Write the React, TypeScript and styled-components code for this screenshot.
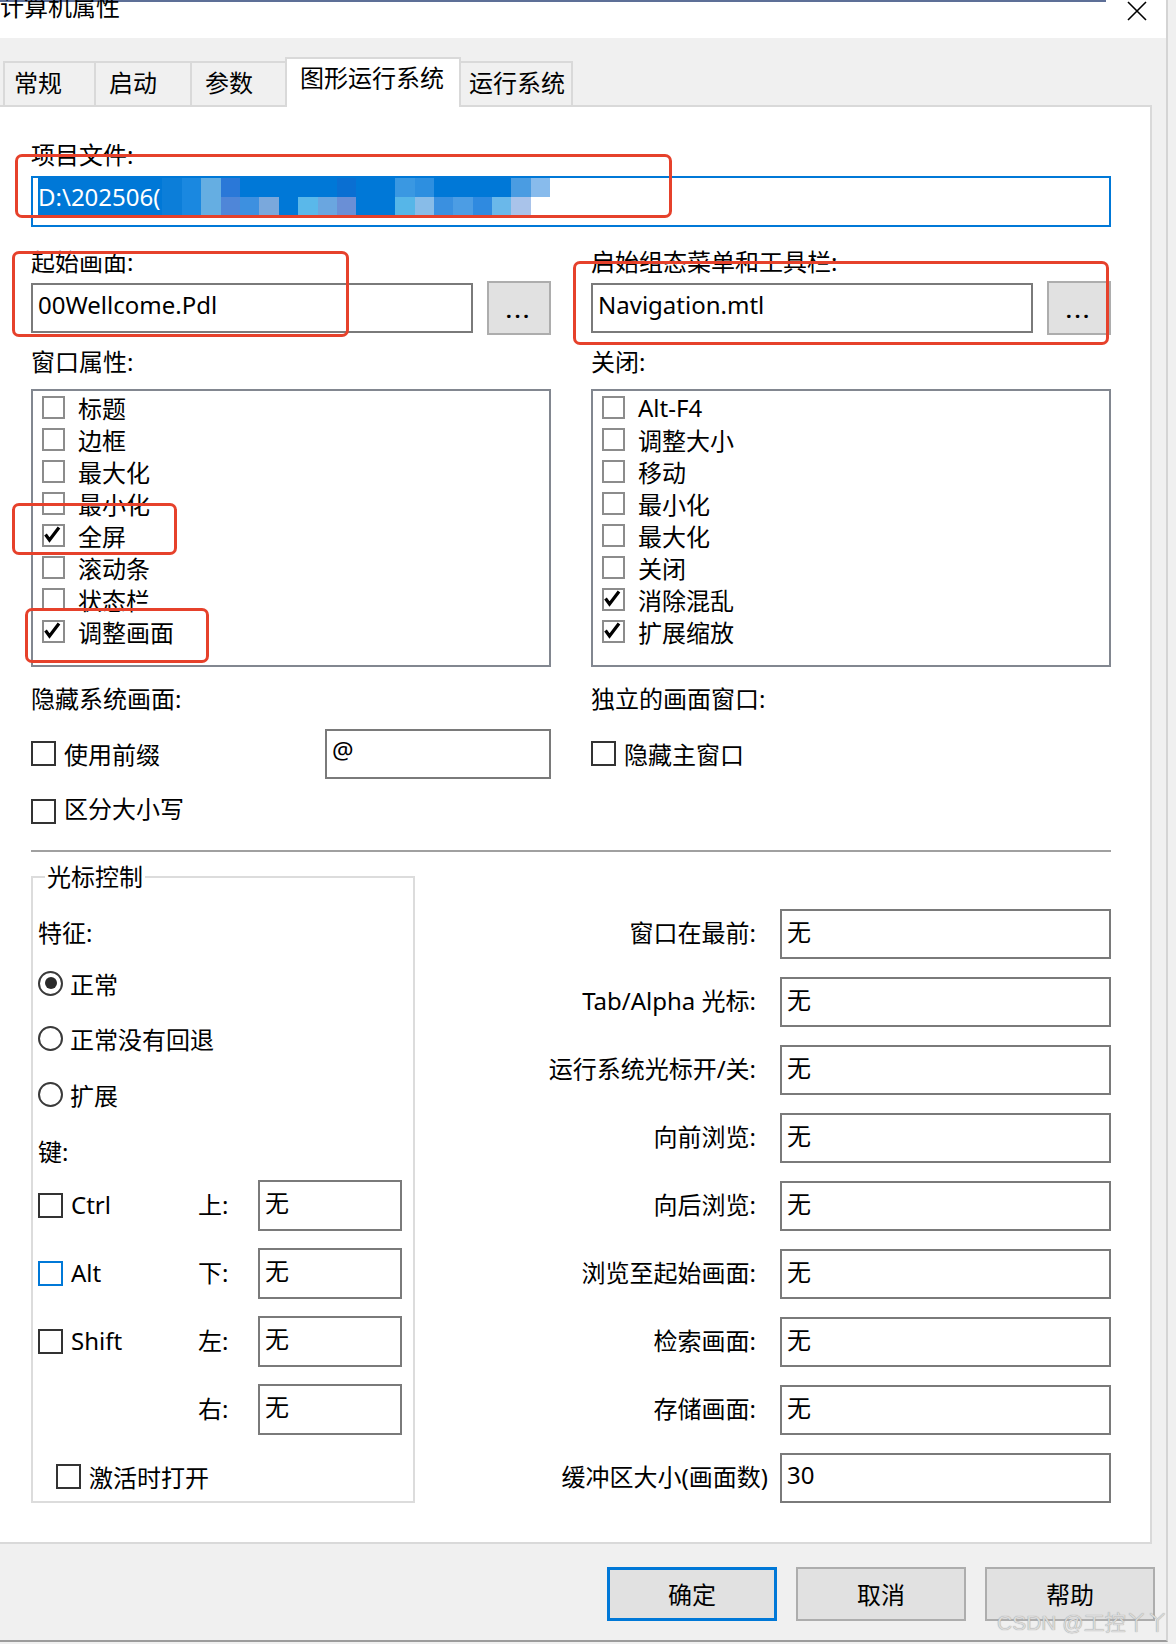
import React from "react";
import styled, { createGlobalStyle, css } from "styled-components";

const FONT = `"Noto Sans", "Noto Sans CJK SC", sans-serif`;

const GlobalStyle = createGlobalStyle`
  * { box-sizing: border-box; }
  html, body { margin: 0; padding: 0; background: #f0f0f0; }
  body {
    font-family: ${FONT};
    font-size: 24px;
    color: #000;
  }
`;

const Page = styled.div`
  position: relative;
  width: 1176px;
  height: 1644px;
  overflow: hidden;
  background: #f0f0f0;
`;

const Dialog = styled.div`
  width: 1168px;
  height: 1642px;
  display: flex;
  flex-direction: column;
  background: #f0f0f0;
  border-right: 2px solid #d4d4d4;
  border-bottom: 2px solid #9c9c9c;
`;

const TitleBar = styled.div`
  flex: none;
  height: 38px;
  display: flex;
  align-items: flex-start;
  justify-content: space-between;
  overflow: hidden;
  background: linear-gradient(#5d6f97, #5d6f97) no-repeat 0 0 / 1106px 2px, #fff;
`;

const TitleText = styled.div`
  margin-top: -9px;
  line-height: 32px;
  white-space: nowrap;
`;

const CloseButton = styled.div`
  margin: -5px 19px 0 0;
  width: 20px;
  height: 20px;
`;

const TabStrip = styled.div`
  flex: none;
  height: 67px;
  display: flex;
  align-items: flex-end;
  padding-left: 3px;
`;

const Tab = styled.div<{ $w: number; $pl: number; $active?: boolean }>`
  width: ${p => p.$w}px;
  height: 44px;
  margin-left: -2px;
  padding-left: ${p => p.$pl}px;
  border: 2px solid #d9d9d9;
  border-bottom: none;
  background: #f0f0f0;
  line-height: 40px;
  white-space: nowrap;
  &:first-child {
    margin-left: 0;
  }
  ${p =>
    p.$active &&
    css`
      position: relative;
      z-index: 1;
      height: 50px;
      margin-bottom: -2px;
      background: #fff;
      line-height: 38px;
    `}
`;

const Panel = styled.div`
  flex: none;
  width: 1152px;
  height: 1439px;
  display: flex;
  flex-direction: column;
  padding: 0 39px 0 31px;
  background: #fff;
  border: 2px solid #d9d9d9;
  border-left: none;
`;

const FieldLabel = styled.div<{ $mt?: number }>`
  height: 32px;
  line-height: 32px;
  margin-top: ${p => p.$mt ?? 0}px;
  white-space: nowrap;
`;

const PathBox = styled.div`
  margin-top: 5px;
  height: 51px;
  display: flex;
  align-items: flex-start;
  padding-left: 5px;
  border: 2px solid #0078d7;
`;

const Selection = styled.span`
  height: 38px;
  line-height: 38px;
  padding-right: 2px;
  background: #0078d7;
  color: #fff;
  white-space: nowrap;
`;

const Mosaic = styled.div`
  display: grid;
  grid-template-columns: repeat(20, 19.4px);
  grid-template-rows: 19px 19px;
`;

const MosaicCell = styled.div<{ $c: string }>`
  background: ${p => p.$c};
`;

const TwoCol = styled.div<{ $mt?: number }>`
  display: grid;
  grid-template-columns: 520px 520px;
  column-gap: 40px;
  margin-top: ${p => p.$mt ?? 0}px;
`;

const Column = styled.div`
  display: flex;
  flex-direction: column;
`;

const BrowseRow = styled.div`
  margin-top: 3px;
  height: 54px;
  display: flex;
  align-items: center;
`;

const TextBox = styled.div<{ $w?: number }>`
  ${p => (p.$w ? `width: ${p.$w}px;` : "flex: 1;")}
  height: 50px;
  display: flex;
  align-items: center;
  padding: 0 0 8px 5px;
  border: 2px solid #7a7a7a;
  background: #fff;
  white-space: nowrap;
`;

const EllipsisButton = styled.div`
  width: 64px;
  height: 54px;
  margin-left: 14px;
  display: flex;
  align-items: center;
  justify-content: center;
  padding-top: 4px;
  background: #e1e1e1;
  border: 2px solid #adadad;
  font-size: 20px;
  font-weight: 700;
  letter-spacing: 3px;
`;

const ListBox = styled.div`
  margin-top: 11px;
  height: 278px;
  border: 2px solid #828790;
  background: #fff;
`;

const ListItem = styled.div`
  height: 32px;
  display: flex;
  align-items: center;
  gap: 13px;
  padding-left: 9px;
  white-space: nowrap;
`;

const ListCheck = styled.span`
  flex: none;
  width: 23px;
  height: 23px;
  border: 2px solid #8c8c8c;
  background: #fff;
  display: flex;
`;

const CheckRow = styled.div<{ $ml?: number; $mt?: number }>`
  height: 32px;
  display: flex;
  align-items: center;
  gap: 8px;
  margin-left: ${p => p.$ml ?? 0}px;
  margin-top: ${p => p.$mt ?? 0}px;
  white-space: nowrap;
`;

const CheckText = styled.span<{ $lift?: number }>`
  margin-bottom: ${p => (p.$lift ?? 0) * 2}px;
`;

const Box = styled.span<{ $focus?: boolean }>`
  flex: none;
  width: 25px;
  height: 25px;
  background: #fff;
  border: 2px solid ${p => (p.$focus ? "#0078d7" : "#333")};
`;

const OptionLine = styled.div<{ $mt?: number; $h?: number }>`
  margin-top: ${p => p.$mt ?? 0}px;
  height: ${p => p.$h ?? 32}px;
  display: flex;
  align-items: center;
  justify-content: space-between;
`;

const Separator = styled.div`
  margin-top: 23px;
  height: 2px;
  background: #a0a0a0;
`;

const Lower = styled.div`
  margin-top: 13px;
  display: flex;
  align-items: flex-end;
`;

const GroupBox = styled.fieldset`
  flex: none;
  width: 384px;
  min-width: 0;
  margin: 0;
  padding: 0 0 9px 5px;
  border: 2px solid #dcdcdc;
  display: flex;
  flex-direction: column;
`;

const Legend = styled.legend`
  margin-left: 7px;
  padding: 0 2px;
  line-height: 24px;
`;

const RadioList = styled.div`
  margin-top: 18px;
  display: flex;
  flex-direction: column;
  gap: 23.5px;
`;

const RadioRow = styled.div`
  height: 32px;
  display: flex;
  align-items: center;
  gap: 7px;
  white-space: nowrap;
`;

const Radio = styled.span<{ $on?: boolean }>`
  flex: none;
  width: 25px;
  height: 25px;
  border-radius: 50%;
  border: 2px solid #3a3a3a;
  display: flex;
  align-items: center;
  justify-content: center;
  &::after {
    content: "";
    display: ${p => (p.$on ? "block" : "none")};
    width: 12px;
    height: 12px;
    border-radius: 50%;
    background: #2a2a2a;
  }
`;

const KeyGrid = styled.div`
  margin-top: 12px;
  display: grid;
  grid-template-columns: 160px 60px 144px;
  grid-auto-rows: 51px;
  row-gap: 17px;
  align-items: center;
`;

const DirLabel = styled.span`
  padding-bottom: 4px;
`;

const KeyInput = styled.div`
  height: 51px;
  display: flex;
  align-items: center;
  padding: 0 0 8px 5px;
  border: 2px solid #7a7a7a;
`;

const RightGrid = styled.div`
  flex: 1;
  display: grid;
  grid-template-columns: 1fr 331px;
  grid-auto-rows: 50px;
  row-gap: 18px;
  column-gap: 24px;
  align-items: center;
`;

const RowLabel = styled.div<{ $wide?: boolean }>`
  text-align: right;
  white-space: nowrap;
  padding-bottom: 5px;
  margin-right: ${p => (p.$wide ? -12 : 0)}px;
`;

const Footer = styled.div`
  flex: 1;
  display: flex;
  justify-content: flex-end;
  align-items: flex-start;
  gap: 19px;
  padding: 23px 11px 0 0;
`;

const DialogButton = styled.div<{ $primary?: boolean }>`
  width: 170px;
  height: 54px;
  display: flex;
  align-items: center;
  justify-content: center;
  padding-bottom: 2px;
  background: #e1e1e1;
  border: 2px solid #adadad;
  ${p =>
    p.$primary &&
    css`
      border: 3px solid #0078d7;
    `}
`;

const Annotation = styled.div<{ $x: number; $y: number; $w: number; $h: number }>`
  position: absolute;
  left: ${p => p.$x}px;
  top: ${p => p.$y}px;
  width: ${p => p.$w}px;
  height: ${p => p.$h}px;
  border: 3px solid #e6412b;
  border-radius: 7px;
  pointer-events: none;
`;

const Watermark = styled.div`
  position: absolute;
  left: 997px;
  top: 1606px;
  font-family: "Liberation Sans", "Noto Sans CJK SC", sans-serif;
  font-size: 21px;
  color: #dadada;
  text-shadow: 0 0 1px #8a8a8a;
  white-space: nowrap;
`;

const Tick = () => (
  <svg width="19" height="19" viewBox="0 0 19 19">
    <path d="M1.5 8.5 L5.5 14 L15 1.5" fill="none" stroke="#000" strokeWidth="3.2" />
  </svg>
);

const tabs = [
  { label: "常规", w: 93, pl: 9 },
  { label: "启动", w: 98, pl: 13 },
  { label: "参数", w: 97, pl: 13 },
  { label: "图形运行系统", w: 176, pl: 13, active: true },
  { label: "运行系统", w: 114, pl: 8 }
];

const mosaicTop = [
  "#0c7ed9", "#1a88e0", "#65aee2", "#2a78d8", "#0078d7", "#0078d7", "#0078d7",
  "#0078d7", "#0078d7", "#0a6fd2", "#0078d7", "#0078d7", "#3a98e2", "#2d8fe0",
  "#0078d7", "#0078d7", "#0078d7", "#0078d7", "#4a9ce2", "#88bbec"
];
const mosaicBottom = [
  "#0c7ed9", "#1a88e0", "#65aee2", "#4f86d8", "#3d90e0", "#7aa8dc", "#0078d7",
  "#5ab8ea", "#6aa6e0", "#6a8fd6", "#0078d7", "#0078d7", "#56b6e8", "#88bce8",
  "#3a90e0", "#4c9de4", "#2f8ae0", "#6ab8ea", "#a9c3ea", "transparent"
];

const windowProps = [
  { label: "标题" },
  { label: "边框" },
  { label: "最大化" },
  { label: "最小化" },
  { label: "全屏", on: true },
  { label: "滚动条" },
  { label: "状态栏" },
  { label: "调整画面", on: true }
];

const closeProps = [
  { label: "Alt-F4" },
  { label: "调整大小" },
  { label: "移动" },
  { label: "最小化" },
  { label: "最大化" },
  { label: "关闭" },
  { label: "消除混乱", on: true },
  { label: "扩展缩放", on: true }
];

const keys = [
  { key: "Ctrl", dir: "上:" },
  { key: "Alt", dir: "下:", focus: true },
  { key: "Shift", dir: "左:" },
  { key: "", dir: "右:" }
];

const shortcuts = [
  { label: "窗口在最前:", value: "无" },
  { label: "Tab/Alpha 光标:", value: "无" },
  { label: "运行系统光标开/关:", value: "无" },
  { label: "向前浏览:", value: "无" },
  { label: "向后浏览:", value: "无" },
  { label: "浏览至起始画面:", value: "无" },
  { label: "检索画面:", value: "无" },
  { label: "存储画面:", value: "无" },
  { label: "缓冲区大小(画面数)", value: "30", wide: true }
];

const annotations = [
  { x: 15, y: 154, w: 657, h: 64 },
  { x: 12, y: 251, w: 337, h: 86 },
  { x: 573, y: 261, w: 536, h: 84 },
  { x: 12, y: 503, w: 165, h: 52 },
  { x: 25, y: 608, w: 184, h: 55 }
];

const CheckList = ({ items }: { items: { label: string; on?: boolean }[] }) => (
  <ListBox>
    {items.map(item => (
      <ListItem key={item.label}>
        <ListCheck>{item.on && <Tick />}</ListCheck>
        {item.label}
      </ListItem>
    ))}
  </ListBox>
);

const App = () => {
  return (
    <Page>
      <GlobalStyle />
      <Dialog>
        <TitleBar>
          <TitleText>计算机属性</TitleText>
          <CloseButton>
            <svg width="20" height="20" viewBox="0 0 20 20">
              <path d="M1 1 L19 19 M19 1 L1 19" stroke="#000" strokeWidth="1.6" />
            </svg>
          </CloseButton>
        </TitleBar>

        <TabStrip>
          {tabs.map(t => (
            <Tab key={t.label} $w={t.w} $pl={t.pl} $active={t.active}>
              {t.label}
            </Tab>
          ))}
        </TabStrip>

        <Panel>
          <FieldLabel $mt={32}>项目文件:</FieldLabel>
          <PathBox>
            <Selection>D:\202506(</Selection>
            <Mosaic>
              {mosaicTop.map((c, i) => (
                <MosaicCell key={"t" + i} $c={c} />
              ))}
              {mosaicBottom.map((c, i) => (
                <MosaicCell key={"b" + i} $c={c} />
              ))}
            </Mosaic>
          </PathBox>

          <TwoCol $mt={19}>
            <Column>
              <FieldLabel>起始画面:</FieldLabel>
              <BrowseRow>
                <TextBox>00Wellcome.Pdl</TextBox>
                <EllipsisButton>...</EllipsisButton>
              </BrowseRow>
            </Column>
            <Column>
              <FieldLabel>启始组态菜单和工具栏:</FieldLabel>
              <BrowseRow>
                <TextBox>Navigation.mtl</TextBox>
                <EllipsisButton>...</EllipsisButton>
              </BrowseRow>
            </Column>
          </TwoCol>

          <TwoCol $mt={11}>
            <Column>
              <FieldLabel>窗口属性:</FieldLabel>
              <CheckList items={windowProps} />
            </Column>
            <Column>
              <FieldLabel>关闭:</FieldLabel>
              <CheckList items={closeProps} />
            </Column>
          </TwoCol>

          <TwoCol $mt={16}>
            <Column>
              <FieldLabel>隐藏系统画面:</FieldLabel>
              <OptionLine $mt={13} $h={51}>
                <CheckRow>
                  <Box />
                  <CheckText>使用前缀</CheckText>
                </CheckRow>
                <TextBox $w={226}>@</TextBox>
              </OptionLine>
              <OptionLine $mt={16}>
                <CheckRow>
                  <Box />
                  <CheckText $lift={4}>区分大小写</CheckText>
                </CheckRow>
              </OptionLine>
            </Column>
            <Column>
              <FieldLabel>独立的画面窗口:</FieldLabel>
              <OptionLine $mt={13} $h={51}>
                <CheckRow>
                  <Box />
                  <CheckText>隐藏主窗口</CheckText>
                </CheckRow>
              </OptionLine>
            </Column>
          </TwoCol>

          <Separator />

          <Lower>
            <GroupBox>
              <Legend>光标控制</Legend>
              <FieldLabel $mt={28}>特征:</FieldLabel>
              <RadioList>
                <RadioRow>
                  <Radio $on />
                  正常
                </RadioRow>
                <RadioRow>
                  <Radio />
                  正常没有回退
                </RadioRow>
                <RadioRow>
                  <Radio />
                  扩展
                </RadioRow>
              </RadioList>
              <FieldLabel $mt={26}>键:</FieldLabel>
              <KeyGrid>
                {keys.map(k => (
                  <React.Fragment key={k.dir}>
                    {k.key ? (
                      <CheckRow>
                        <Box $focus={k.focus} />
                        <CheckText $lift={1}>{k.key}</CheckText>
                      </CheckRow>
                    ) : (
                      <span />
                    )}
                    <DirLabel>{k.dir}</DirLabel>
                    <KeyInput>无</KeyInput>
                  </React.Fragment>
                ))}
              </KeyGrid>
              <CheckRow $ml={18} $mt={25}>
                <Box />
                <CheckText>激活时打开</CheckText>
              </CheckRow>
            </GroupBox>

            <RightGrid>
              {shortcuts.map(s => (
                <React.Fragment key={s.label}>
                  <RowLabel $wide={s.wide}>{s.label}</RowLabel>
                  <TextBox>{s.value}</TextBox>
                </React.Fragment>
              ))}
            </RightGrid>
          </Lower>
        </Panel>

        <Footer>
          <DialogButton $primary>确定</DialogButton>
          <DialogButton>取消</DialogButton>
          <DialogButton>帮助</DialogButton>
        </Footer>
      </Dialog>

      {annotations.map((a, i) => (
        <Annotation key={i} $x={a.x} $y={a.y} $w={a.w} $h={a.h} />
      ))}
      <Watermark>CSDN @工控丫丫</Watermark>
    </Page>
  );
};

export default App;
